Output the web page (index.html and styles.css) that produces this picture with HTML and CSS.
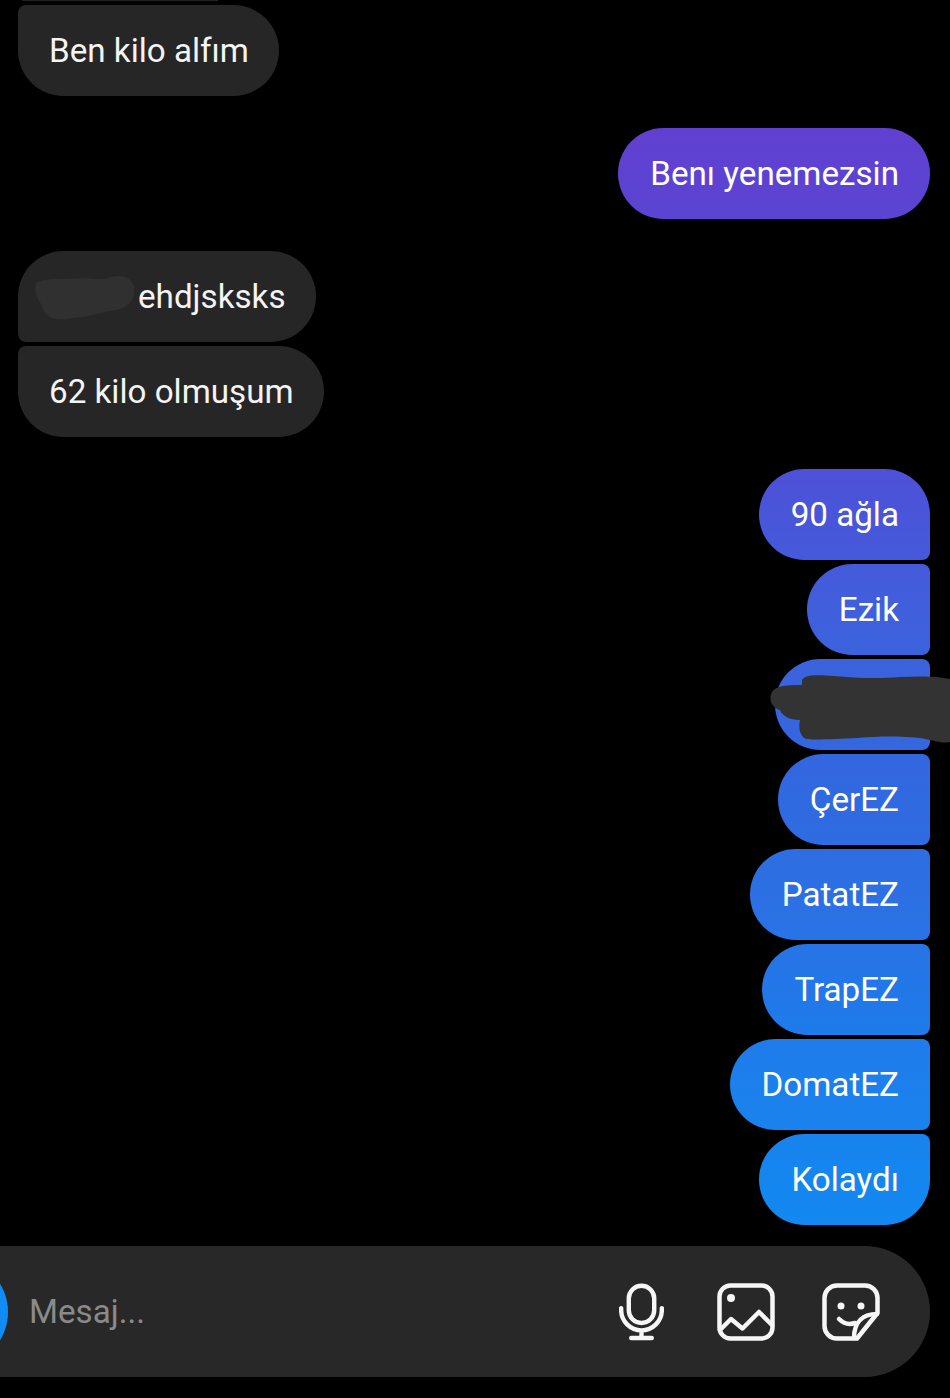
FILE: index.html
```html
<!DOCTYPE html>
<html lang="tr">
<head>
<meta charset="utf-8">
<title>Mesaj</title>
<link rel="stylesheet" href="styles.css">
</head>
<body>
<main class="screen">
  <section class="thread">
    <div class="group group-in group-cut">
      <div class="sliver"></div>
      <div class="bubble in first-cut">Ben kilo alfım</div>
    </div>
    <div class="group group-out">
      <div class="bubble out">Benı yenemezsin</div>
    </div>
    <div class="group group-in">
      <div class="bubble in in-top">
        <span class="redact-inline">
          <svg class="scribble-small" viewBox="0 0 102 46" aria-hidden="true"><path d="M3 8C12 2 30 5 48 3C60 3 68 6 78 2C88-1 99 2 101 12C103 24 96 33 82 35C66 37 58 42 40 43C28 46 14 45 10 34C8 26 0 22 3 8Z"/></svg>
        </span><span>ehdjsksks</span>
      </div>
      <div class="bubble in in-bottom">62 kilo olmuşum</div>
    </div>
    <div class="group group-out">
      <div class="bubble out out-top">90 ağla</div>
      <div class="bubble out out-mid">Ezik</div>
      <div class="bubble out out-mid hidden-name">
        <svg class="scribble-large" viewBox="0 0 180 70" aria-hidden="true"><path d="M32 6C36 0 48 1 64 2C84 4 110 5 130 3C150 2 168 2 180 5V68C172 70 164 66 150 64C130 62 110 62 88 64C66 65 44 66 36 65C30 62 28 54 30 46C20 46 12 42 10 36C2 34-2 26 2 18C6 12 14 11 32 11Z"/></svg>
      </div>
      <div class="bubble out out-mid">ÇerEZ</div>
      <div class="bubble out out-mid">PatatEZ</div>
      <div class="bubble out out-mid">TrapEZ</div>
      <div class="bubble out out-mid">DomatEZ</div>
      <div class="bubble out out-bottom">Kolaydı</div>
    </div>
  </section>
  <footer class="composer">
    <div class="avatar"></div>
    <div class="placeholder">Mesaj...</div>
    <svg class="icon icon-mic" viewBox="0 0 46 58" aria-hidden="true">
      <rect x="10" y="2.2" width="26" height="38" rx="13"/>
      <path d="M2.2 25V27A20.8 20.8 0 0 0 43.800 27V25M23 48V55M12.500 55.500H33.500"/>
    </svg>
    <svg class="icon icon-image" viewBox="0 0 58 58" aria-hidden="true">
      <rect x="2.500" y="2.500" width="53" height="53" rx="11"/>
      <circle class="dot" cx="14" cy="15" r="4"/>
      <path d="M3 47L14 36L25.500 45.500L42 29L55 42"/>
    </svg>
    <svg class="icon icon-sticker" viewBox="0 0 58 58" aria-hidden="true">
      <path d="M15 2.500H43A12.500 12.500 0 0 1 55.500 15V30L35 55.500H15A12.500 12.500 0 0 1 2.500 43V15A12.500 12.500 0 0 1 15 2.500Z"/>
      <path d="M55 31C42 31 32 38 32 55"/>
      <path d="M17 36C22 41 27 42 33 40"/>
      <circle class="dot" cx="19" cy="23" r="3.500"/>
      <circle class="dot" cx="39" cy="23" r="3.500"/>
    </svg>
  </footer>
</main>
</body>
</html>
```
FILE: styles.css
```css
* { box-sizing: border-box; }
html, body { margin: 0; padding: 0; background: #000; }
body { width: 950px; height: 1398px; overflow: hidden; }
.screen {
  width: 950px;
  height: 1398px;
  display: flex;
  flex-direction: column;
  font-family: Roboto, "Liberation Sans", sans-serif;
  color: #f4f4f4;
}
.thread {
  display: flex;
  flex-direction: column;
  gap: 32px;
  padding: 0 20px 0 18px;
}
.group { display: flex; flex-direction: column; gap: 4px; }
.group-in { align-items: flex-start; }
.group-out { align-items: flex-end; }
.sliver {
  width: 196px;
  height: 1px;
  margin-left: 4px;
  background: #222;
}
.bubble {
  height: 91px;
  display: flex;
  align-items: center;
  font-size: 33.2px;
  line-height: 1;
  white-space: nowrap;
  border-radius: 45.500px;
}
.in { padding: 0 30px 0 31px; background: #262626; }
.out {
  padding: 0 31px 0 32px;
  color: #fff;
  background: linear-gradient(180deg, #6040d0 130px, #4c52d8 480px, #3f60dc 620px, #3069e0 800px, #2c70e4 900px, #2178e8 1000px, #1c80ec 1090px, #1288f0 1220px) fixed;
}
.first-cut, .in-bottom { border-top-left-radius: 8px; }
.in-top { border-bottom-left-radius: 8px; }
.out-top { border-bottom-right-radius: 8px; }
.out-mid { border-top-right-radius: 8px; border-bottom-right-radius: 8px; }
.out-bottom { border-top-right-radius: 8px; }
.redact-inline { position: relative; display: block; width: 89px; height: 46px; }
.scribble-small {
  position: absolute;
  left: -16px;
  top: 1px;
  width: 102px;
  height: 46px;
  fill: #303030;
}
.hidden-name { position: relative; width: 155px; }
.scribble-large {
  position: absolute;
  left: -5px;
  top: 15px;
  width: 180px;
  height: 70px;
  fill: #333;
}
.composer {
  position: relative;
  width: 930px;
  height: 131px;
  margin-top: 21px;
  display: flex;
  align-items: center;
  background: #282828;
  border-radius: 0 65.500px 65.500px 0;
}
.avatar {
  width: 108px;
  height: 108px;
  margin-left: -100px;
  border-radius: 50%;
  background: #0f8df5;
  flex: none;
}
.placeholder {
  margin-left: 21px;
  font-size: 33.2px;
  line-height: 1;
  color: #8a8a8a;
  flex: 1;
}
.icon {
  flex: none;
  fill: none;
  stroke: #f6f6f6;
  stroke-width: 4.500;
  stroke-linecap: round;
  stroke-linejoin: round;
}
.icon .dot { fill: #f6f6f6; stroke: none; }
.icon-mic { width: 45px; height: 58px; margin-left: 1px; }
.icon-image { width: 58px; height: 58px; margin-left: 53px; }
.icon-sticker { width: 58px; height: 58px; margin-left: 47px; margin-right: 50px; }
```
